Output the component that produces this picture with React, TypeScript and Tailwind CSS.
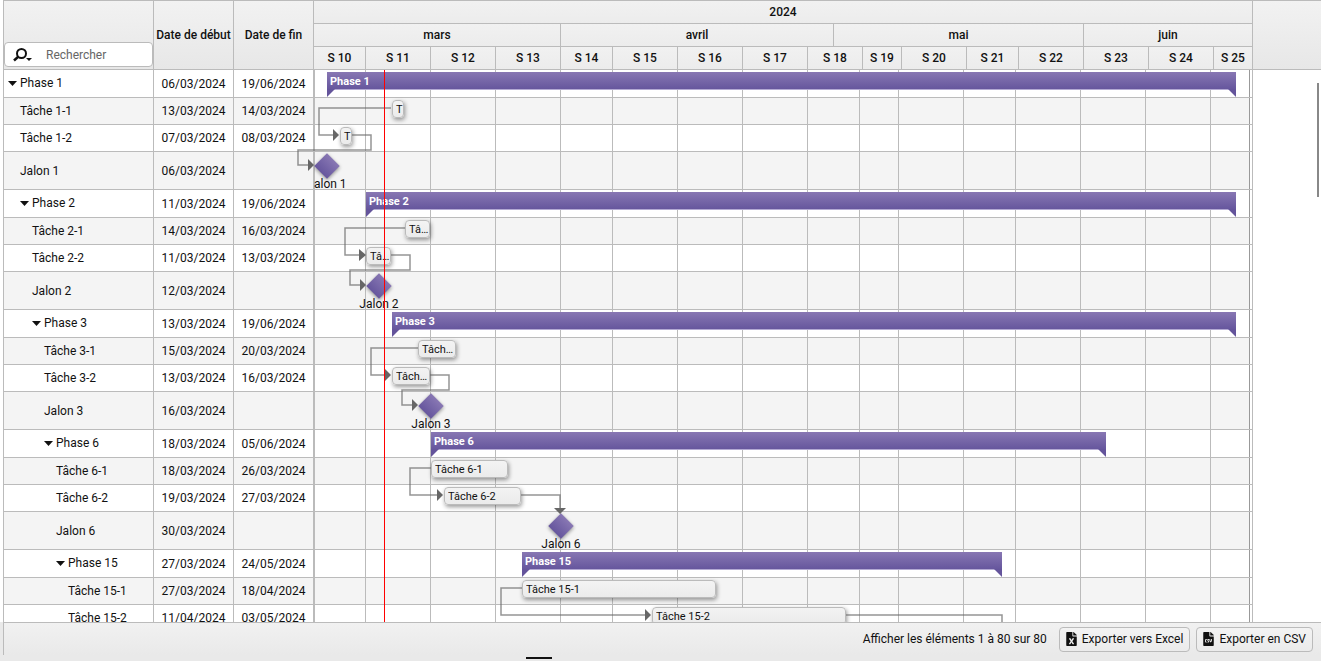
import { FaFileCsv, FaFileExcel } from "react-icons/fa";

const DAY = 13;

type Item = {
  kind: "phase" | "task" | "milestone";
  name: string;
  level: number;
  start: string;
  end?: string;
  day: number;
  days?: number;
  shaded?: boolean;
};

const items: Item[] = [
  { kind: "phase", name: "Phase 1", level: 0, start: "06/03/2024", end: "19/06/2024", day: 1, days: 70 },
  { kind: "task", name: "Tâche 1-1", level: 0, start: "13/03/2024", end: "14/03/2024", day: 6, days: 1, shaded: true },
  { kind: "task", name: "Tâche 1-2", level: 0, start: "07/03/2024", end: "08/03/2024", day: 2, days: 1 },
  { kind: "milestone", name: "Jalon 1", level: 0, start: "06/03/2024", day: 1, shaded: true },
  { kind: "phase", name: "Phase 2", level: 1, start: "11/03/2024", end: "19/06/2024", day: 4, days: 67 },
  { kind: "task", name: "Tâche 2-1", level: 1, start: "14/03/2024", end: "16/03/2024", day: 7, days: 2, shaded: true },
  { kind: "task", name: "Tâche 2-2", level: 1, start: "11/03/2024", end: "13/03/2024", day: 4, days: 2 },
  { kind: "milestone", name: "Jalon 2", level: 1, start: "12/03/2024", day: 5, shaded: true },
  { kind: "phase", name: "Phase 3", level: 2, start: "13/03/2024", end: "19/06/2024", day: 6, days: 65 },
  { kind: "task", name: "Tâche 3-1", level: 2, start: "15/03/2024", end: "20/03/2024", day: 8, days: 3, shaded: true },
  { kind: "task", name: "Tâche 3-2", level: 2, start: "13/03/2024", end: "16/03/2024", day: 6, days: 3 },
  { kind: "milestone", name: "Jalon 3", level: 2, start: "16/03/2024", day: 9, shaded: true },
  { kind: "phase", name: "Phase 6", level: 3, start: "18/03/2024", end: "05/06/2024", day: 9, days: 52 },
  { kind: "task", name: "Tâche 6-1", level: 3, start: "18/03/2024", end: "26/03/2024", day: 9, days: 6, shaded: true },
  { kind: "task", name: "Tâche 6-2", level: 3, start: "19/03/2024", end: "27/03/2024", day: 10, days: 6 },
  { kind: "milestone", name: "Jalon 6", level: 3, start: "30/03/2024", day: 19, shaded: true },
  { kind: "phase", name: "Phase 15", level: 4, start: "27/03/2024", end: "24/05/2024", day: 16, days: 37 },
  { kind: "task", name: "Tâche 15-1", level: 4, start: "27/03/2024", end: "18/04/2024", day: 16, days: 15, shaded: true },
  { kind: "task", name: "Tâche 15-2", level: 4, start: "11/04/2024", end: "03/05/2024", day: 26, days: 15 },
];

const rowHeight = {
  phase: "h-[28px]",
  task: "h-[27px]",
  milestone: "h-[38px]",
};

const months = [
  { label: "mars", width: 247 },
  { label: "avril", width: 273 },
  { label: "mai", width: 250 },
  { label: "juin", width: 169 },
];

// head: width of the header cell, body: width of the grid column
const weeks = [
  { label: "S 10", head: 52, body: 52 },
  { label: "S 11", head: 65, body: 65 },
  { label: "S 12", head: 65, body: 65 },
  { label: "S 13", head: 65, body: 65 },
  { label: "S 14", head: 52, body: 52 },
  { label: "S 15", head: 65, body: 65 },
  { label: "S 16", head: 65, body: 65 },
  { label: "S 17", head: 65, body: 65 },
  { label: "S 18", head: 55, body: 52 },
  { label: "S 19", head: 39, body: 39 },
  { label: "S 20", head: 65, body: 65 },
  { label: "S 21", head: 52, body: 52 },
  { label: "S 22", head: 65, body: 65 },
  { label: "S 23", head: 65, body: 65 },
  { label: "S 24", head: 65, body: 65 },
  { label: "S 25", head: 39, body: 39 },
];

const links = [
  { line: "M77 38H5V65H19", arrow: "M19 59L25 65L19 71Z" },
  { line: "M38 65H57V80H-16V95H-6", arrow: "M-6 89L0 95L-6 101Z" },
  { line: "M91 158H31V185H45", arrow: "M45 179L52 185L45 191Z" },
  { line: "M77 185H96V200H36V215H46", arrow: "M46 209L52 215L46 221Z" },
  { line: "M104 278H57V305H71", arrow: "M71 299L77 305L71 311Z" },
  { line: "M116 305H135V320H88V335H98", arrow: "M98 329L104 335L98 341Z" },
  { line: "M117 398H96V425H123", arrow: "M123 419L129 425L123 431Z" },
  { line: "M207 425H246V438", arrow: "M240 438H252L246 444Z" },
  { line: "M208 518H187V545H331", arrow: "M331 539L337 545L331 551Z" },
  { line: "M532 545H688V570", arrow: "" },
];

function SearchIcon() {
  return (
    <svg width="20" height="16" viewBox="0 0 20 16" fill="none">
      <circle cx="8.5" cy="6.5" r="4.5" stroke="#111" strokeWidth="2" />
      <path d="M5.5 9.5L1 13.5" stroke="#111" strokeWidth="2.5" />
      <path d="M13 11H19L16 14Z" fill="#111" />
    </svg>
  );
}

function ItemTable() {
  return (
    <table className="w-[311px] shrink-0 table-fixed border-separate border-spacing-0 self-start text-center">
      <colgroup>
        <col className="w-[151px]" />
        <col className="w-[80px]" />
        <col className="w-[80px]" />
      </colgroup>
      <thead>
        <tr className="h-[70px]">
          <th className="border border-[#bbb] bg-linear-to-b from-[#f2f2f2] to-[#e7e7e7] p-0 pb-[2px] align-bottom">
            <div className="flex h-[25px] items-center rounded border border-[#bbb] bg-white">
              <button type="button" aria-label="Options de recherche" className="ml-2 shrink-0">
                <SearchIcon />
              </button>
              <input
                type="text"
                aria-label="Rechercher"
                placeholder="Rechercher"
                className="ml-[13px] w-full min-w-0 font-normal outline-none placeholder:text-[#666]"
              />
            </div>
          </th>
          <th className="border-y border-r border-[#bbb] bg-linear-to-b from-[#f2f2f2] to-[#e7e7e7] p-0 font-medium whitespace-nowrap">
            Date de début
          </th>
          <th className="border-y border-r border-[#bbb] bg-linear-to-b from-[#f2f2f2] to-[#e7e7e7] p-0 font-medium whitespace-nowrap">
            Date de fin
          </th>
        </tr>
      </thead>
      <tbody>
        {items.map((item) => (
          <tr key={item.name} className={`${rowHeight[item.kind]} ${item.shaded ? "bg-[#f4f4f4]" : "bg-white"}`}>
            <td className="border-x border-b border-[#bbb] p-0">
              {item.kind === "phase" ? (
                <div className="flex items-center gap-[3px] pb-[2px]" style={{ paddingLeft: 4 + item.level * 12 }}>
                  <button type="button" aria-label={`Réduire ${item.name}`} className="pt-[2px]">
                    <svg width="9" height="5" viewBox="0 0 9 5">
                      <path d="M0 0H9L4.5 5Z" fill="#111" />
                    </svg>
                  </button>
                  {item.name}
                </div>
              ) : (
                <div className="text-left" style={{ paddingLeft: 16 + item.level * 12 }}>
                  {item.name}
                </div>
              )}
            </td>
            <td className="border-r border-b border-[#bbb] p-0">{item.start}</td>
            <td className="border-r border-b border-[#bbb] p-0">{item.end}</td>
          </tr>
        ))}
      </tbody>
    </table>
  );
}

function TimelineHeader() {
  const cell =
    "flex h-[23px] shrink-0 items-center justify-center border-r border-b border-[#bbb] bg-linear-to-b from-[#f1f1f1] to-[#ececec]";

  return (
    <div className="flex border-t border-[#bbb] font-medium">
      <div className="shrink-0">
        <div className={cell}>2024</div>
        <div className="flex">
          {months.map((month) => (
            <div key={month.label} className={cell} style={{ width: month.width }}>
              {month.label}
            </div>
          ))}
        </div>
        <div className="flex">
          {weeks.map((week) => (
            <div key={week.label} className={cell} style={{ width: week.head }}>
              {week.label}
            </div>
          ))}
        </div>
      </div>
      <div className="flex-1 border-b border-[#bbb] bg-linear-to-b from-[#f2f2f2] to-[#e7e7e7]" />
    </div>
  );
}

function Bar({ item }: { item: Item }) {
  const left = item.day * DAY;
  const width = (item.days ?? 0) * DAY - 1;

  if (item.kind === "phase") {
    return (
      <div className="absolute top-[2px]" style={{ left, width }}>
        <div className="h-[18px] border-b border-[#b3a9d3] bg-linear-to-b from-[#8877b3] to-[#66569d] pl-[3px] text-[11px] leading-[20px] font-bold text-white">
          {item.name}
        </div>
        <div className="-mt-px flex justify-between">
          <svg width="8" height="8" viewBox="0 0 8 8">
            <path d="M0 0H8L0 8Z" fill="#64549b" />
          </svg>
          <svg width="8" height="8" viewBox="0 0 8 8">
            <path d="M0 0H8V8Z" fill="#64549b" />
          </svg>
        </div>
      </div>
    );
  }

  if (item.kind === "milestone") {
    return (
      <div className="absolute top-[5px] flex w-16 -translate-x-1/2 flex-col items-center" style={{ left }}>
        <div className="size-[18px] rotate-45 bg-linear-to-b from-[#8877b3] to-[#66569d] shadow-[1px_1px_4px_rgba(0,0,0,0.4)]" />
        <div className="mt-px leading-4">{item.name}</div>
      </div>
    );
  }

  return (
    <div
      className="absolute top-[2px] h-[18px] rounded border border-[#bbb] bg-linear-to-b from-[#f3f3f3] to-[#ebebeb] pl-[3px] text-[11px] leading-[18px] shadow-[1px_2px_4px_rgba(0,0,0,0.4)]"
      style={{ left, width }}
    >
      <div className={item.days === 1 ? "whitespace-nowrap" : "truncate"}>
        {item.days === 1 ? "T" : item.name}
      </div>
    </div>
  );
}

function Timeline() {
  return (
    <div className="flex min-w-0 flex-1 flex-col bg-white">
      <TimelineHeader />
      <div className="relative w-[939px]">
        <div className="overflow-hidden border-r border-[#bbb]">
          {items.map((item) => (
            <div key={item.name} className={`relative border-b border-[#bbb] ${rowHeight[item.kind]}`}>
              <div className="flex h-full">
                {weeks.map((week) => (
                  <div
                    key={week.label}
                    className={`shrink-0 border-r border-[#bbb] first:border-l last:border-r-[#999] ${item.shaded ? "bg-[#f4f4f4]" : ""}`}
                    style={{ width: week.body }}
                  />
                ))}
              </div>
              <Bar item={item} />
            </div>
          ))}
        </div>
        <svg className="pointer-events-none absolute inset-0 h-full w-full overflow-visible" fill="none">
          {links.map((link) => (
            <g key={link.line}>
              <path d={link.line} stroke="#666" strokeOpacity="0.7" strokeWidth="1.5" />
              <path d={link.arrow} fill="#666" />
            </g>
          ))}
        </svg>
        <div className="absolute inset-y-0 left-[70px] w-px bg-[#f00]" />
      </div>
    </div>
  );
}

function Footer() {
  const button =
    "flex h-[25px] items-center gap-[5px] rounded border border-[#bbb] bg-linear-to-b from-[#f3f3f3] to-[#ebebeb] px-[6px]";

  return (
    <footer className="relative shrink-0 bg-[#e9e9e9] pb-[6px]">
      <div className="ml-[3px] flex h-[33px] items-center justify-end gap-[6px] border-t border-l border-[#bbb] bg-linear-to-b from-[#f1f1f1] to-[#e9e9e9] pr-2">
        <span className="mr-[6px]">Afficher les éléments 1 à 80 sur 80</span>
        <button type="button" className={button}>
          <FaFileExcel className="h-[14px] w-[11px]" />
          Exporter vers Excel
        </button>
        <button type="button" className={button}>
          <FaFileCsv className="h-[14px] w-[11px]" />
          Exporter en CSV
        </button>
      </div>
      <div className="absolute bottom-[2px] left-[526px] h-[2px] w-[26px] bg-[#111]" />
    </footer>
  );
}

export default function App() {
  return (
    <div className="flex h-screen flex-col bg-white pb-px font-[Roboto,sans-serif] text-[12px] leading-4 text-[#111]">
      <main className="relative flex min-h-0 flex-1 overflow-hidden pl-[3px]">
        <ItemTable />
        <Timeline />
        <div className="absolute top-[83px] right-[2px] h-[114px] w-[2px] bg-[#888]" />
      </main>
      <Footer />
    </div>
  );
}
